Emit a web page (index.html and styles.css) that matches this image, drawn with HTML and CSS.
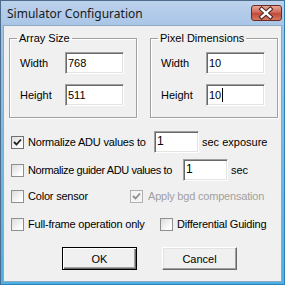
FILE: index.html
```html
<!DOCTYPE html>
<html lang="en">
<head>
  <meta charset="UTF-8">
  <title>Simulator Configuration</title>
  <link rel="stylesheet" href="styles.css">
</head>
<body>
  <div class="window">
    <div class="titlebar">
      <span class="title">Simulator Configuration</span>
      <span class="close">
        <svg width="31" height="16" viewBox="0 0 31 16">
          <path d="M11 4 L20 12 M20 4 L11 12" stroke="#4a2020" stroke-width="4.4" stroke-linecap="square"/>
          <path d="M11 4 L20 12 M20 4 L11 12" stroke="#fff" stroke-width="2.4" stroke-linecap="square"/>
        </svg>
      </span>
    </div>
    <div class="client">
      <div class="groups">
        <fieldset class="group">
          <legend>Array Size</legend>
          <div class="field-row">
            <span class="lbl">Width</span>
            <span class="edit wide">768</span>
          </div>
          <div class="field-row">
            <span class="lbl">Height</span>
            <span class="edit wide">511</span>
          </div>
        </fieldset>
        <fieldset class="group">
          <legend>Pixel Dimensions</legend>
          <div class="field-row">
            <span class="lbl">Width</span>
            <span class="edit wide">10</span>
          </div>
          <div class="field-row">
            <span class="lbl">Height</span>
            <span class="edit wide">10<span class="caret"></span></span>
          </div>
        </fieldset>
      </div>

      <div class="opt-row tall">
        <span class="check on"><svg width="11" height="11" viewBox="0 0 11 11"><path d="M2 5 L4.5 7.5 L9 2.5" fill="none" stroke="#222" stroke-width="1.8"/></svg></span>
        <span class="opt-text w-adu">Normalize ADU values to</span>
        <span class="edit small">1</span>
        <span class="after">sec exposure</span>
      </div>
      <div class="opt-row tall second">
        <span class="check"></span>
        <span class="opt-text w-guider">Normalize guider ADU values to</span>
        <span class="edit small">1</span>
        <span class="after">sec</span>
      </div>
      <div class="opt-row third">
        <span class="check"></span>
        <span class="opt-text w-color">Color sensor</span>
        <span class="check disabled"><svg width="11" height="11" viewBox="0 0 11 11"><path d="M2 5 L4.5 7.5 L9 2.5" fill="none" stroke="#8d8d8d" stroke-width="1.8"/></svg></span>
        <span class="opt-text grey">Apply bgd compensation</span>
      </div>
      <div class="opt-row fourth">
        <span class="check"></span>
        <span class="opt-text w-full">Full-frame operation only</span>
        <span class="check"></span>
        <span class="opt-text">Differential Guiding</span>
      </div>

      <div class="buttons">
        <button class="btn default">OK</button>
        <button class="btn">Cancel</button>
      </div>
    </div>
  </div>
</body>
</html>
```

FILE: styles.css
```css
body {
  margin: 0;
  padding: 0;
  background: #fff;
  font-family: "Liberation Sans", Arial, sans-serif;
  font-size: 11px;
  color: #000;
}
.window {
  width: 285px;
  height: 285px;
  box-sizing: border-box;
  border: 1px solid #4d6c8c;
  border-right-color: #2f7fb8;
  border-bottom-color: #2f7fb8;
  background: linear-gradient(#bcd2ec, #a9c5e6 24px, #9dc4e8 24px, #4cb0e2);
  padding: 0 2px 2px 2px;
  display: flex;
  flex-direction: column;
}
.titlebar {
  height: 24px;
  display: flex;
  align-items: flex-start;
}
.title {
  font-family: "Noto Sans", "Open Sans", sans-serif;
  font-size: 12px;
  line-height: 14px;
  margin: 6px 0 0 4px;
  color: #1a1a1a;
}
.close {
  margin: 4px 0 0 auto;
  width: 31px;
  height: 16px;
  box-sizing: border-box;
  border: 1px solid #6b2a22;
  border-radius: 3px;
  background: linear-gradient(#e8a696, #cf6a58 45%, #c04a3a 55%, #d47a62);
  display: flex;
  align-items: center;
  justify-content: center;
}
.close svg {
  display: block;
  margin-left: -1px;
}
.client {
  flex: 1;
  background: #f0f0f0;
  border: 1px solid #8ea9c3;
  padding: 6px 0 0 5px;
}

/* group boxes */
.groups {
  display: flex;
  gap: 13px;
}
.group {
  width: 128px;
  height: 86px;
  box-sizing: border-box;
  margin: 0;
  padding: 0 0 0 10px;
  border: 1px solid #a0a0a0;
  box-shadow: inset 1px 1px 0 #fff, 1px 1px 0 #fff;
}
.group legend {
  padding: 0 2px;
  margin-left: -3px;
  line-height: 13px;
}
.field-row {
  display: flex;
  align-items: center;
  margin-top: 7px;
}
.field-row + .field-row {
  margin-top: 10px;
}
.lbl {
  width: 45px;
}

/* edit boxes */
.edit {
  display: inline-flex;
  align-items: center;
  flex-shrink: 0;
  box-sizing: border-box;
  height: 22px;
  padding: 0 0 1px 2px;
  background: #fff;
  border: 1px solid;
  border-color: #a0a0a0 #fff #fff #a0a0a0;
  box-shadow: inset 1px 1px 0 #696969, inset -1px -1px 0 #e3e3e3;
}
.edit.wide {
  width: 59px;
}
.edit.small {
  width: 45px;
  font-size: 12px;
  padding-bottom: 3px;
}
.caret {
  display: inline-block;
  width: 1px;
  height: 14px;
  background: #000;
  margin-left: 1px;
}

/* option rows */
.opt-row {
  display: flex;
  align-items: center;
  height: 14px;
  padding-left: 2px;
}
.opt-row.tall {
  height: 22px;
  margin-top: 13px;
}
.opt-row.second {
  margin-top: 6px;
}
.opt-row.third {
  margin-top: 8px;
}
.opt-row.fourth {
  margin-top: 14px;
}
.check {
  width: 13px;
  height: 13px;
  flex-shrink: 0;
  box-sizing: border-box;
  border: 1px solid #8e8f8f;
  background: linear-gradient(135deg, #dcdcdc, #fff 80%);
  display: inline-flex;
  align-items: center;
  justify-content: center;
  margin-right: 4px;
}
.check.on {
  border-color: #707070;
}
.check.disabled {
  border-color: #b1b1b1;
  background: #f4f4f4;
  margin-right: 5px;
}
.check svg {
  display: block;
}
.opt-text {
  white-space: nowrap;
  flex-shrink: 0;
  letter-spacing: -0.2px;
}
.opt-text.w-adu {
  width: 126px;
}
.opt-text.w-guider {
  width: 155px;
  letter-spacing: -0.4px;
}
.opt-text.w-color {
  width: 102px;
}
.opt-text.w-full {
  width: 132px;
}
.grey {
  color: #a0a0a0;
}
.after {
  margin-left: 3px;
  white-space: nowrap;
}

/* buttons */
.buttons {
  display: flex;
  gap: 25px;
  margin-top: 16px;
  padding-left: 53px;
}
.btn {
  width: 75px;
  height: 23px;
  box-sizing: border-box;
  font-family: "Liberation Sans", Arial, sans-serif;
  font-size: 11px;
  color: #000;
  background: #f0f0f0;
  border: 1px solid;
  border-color: #fff #696969 #696969 #fff;
  box-shadow: inset -1px -1px 0 #a0a0a0, inset 1px 1px 0 #e3e3e3;
  padding: 0;
}
.btn.default {
  border: 1px solid #000;
  box-shadow: inset 1px 1px 0 #fff, inset -1px -1px 0 #696969, inset -2px -2px 0 #a0a0a0;
}
```
